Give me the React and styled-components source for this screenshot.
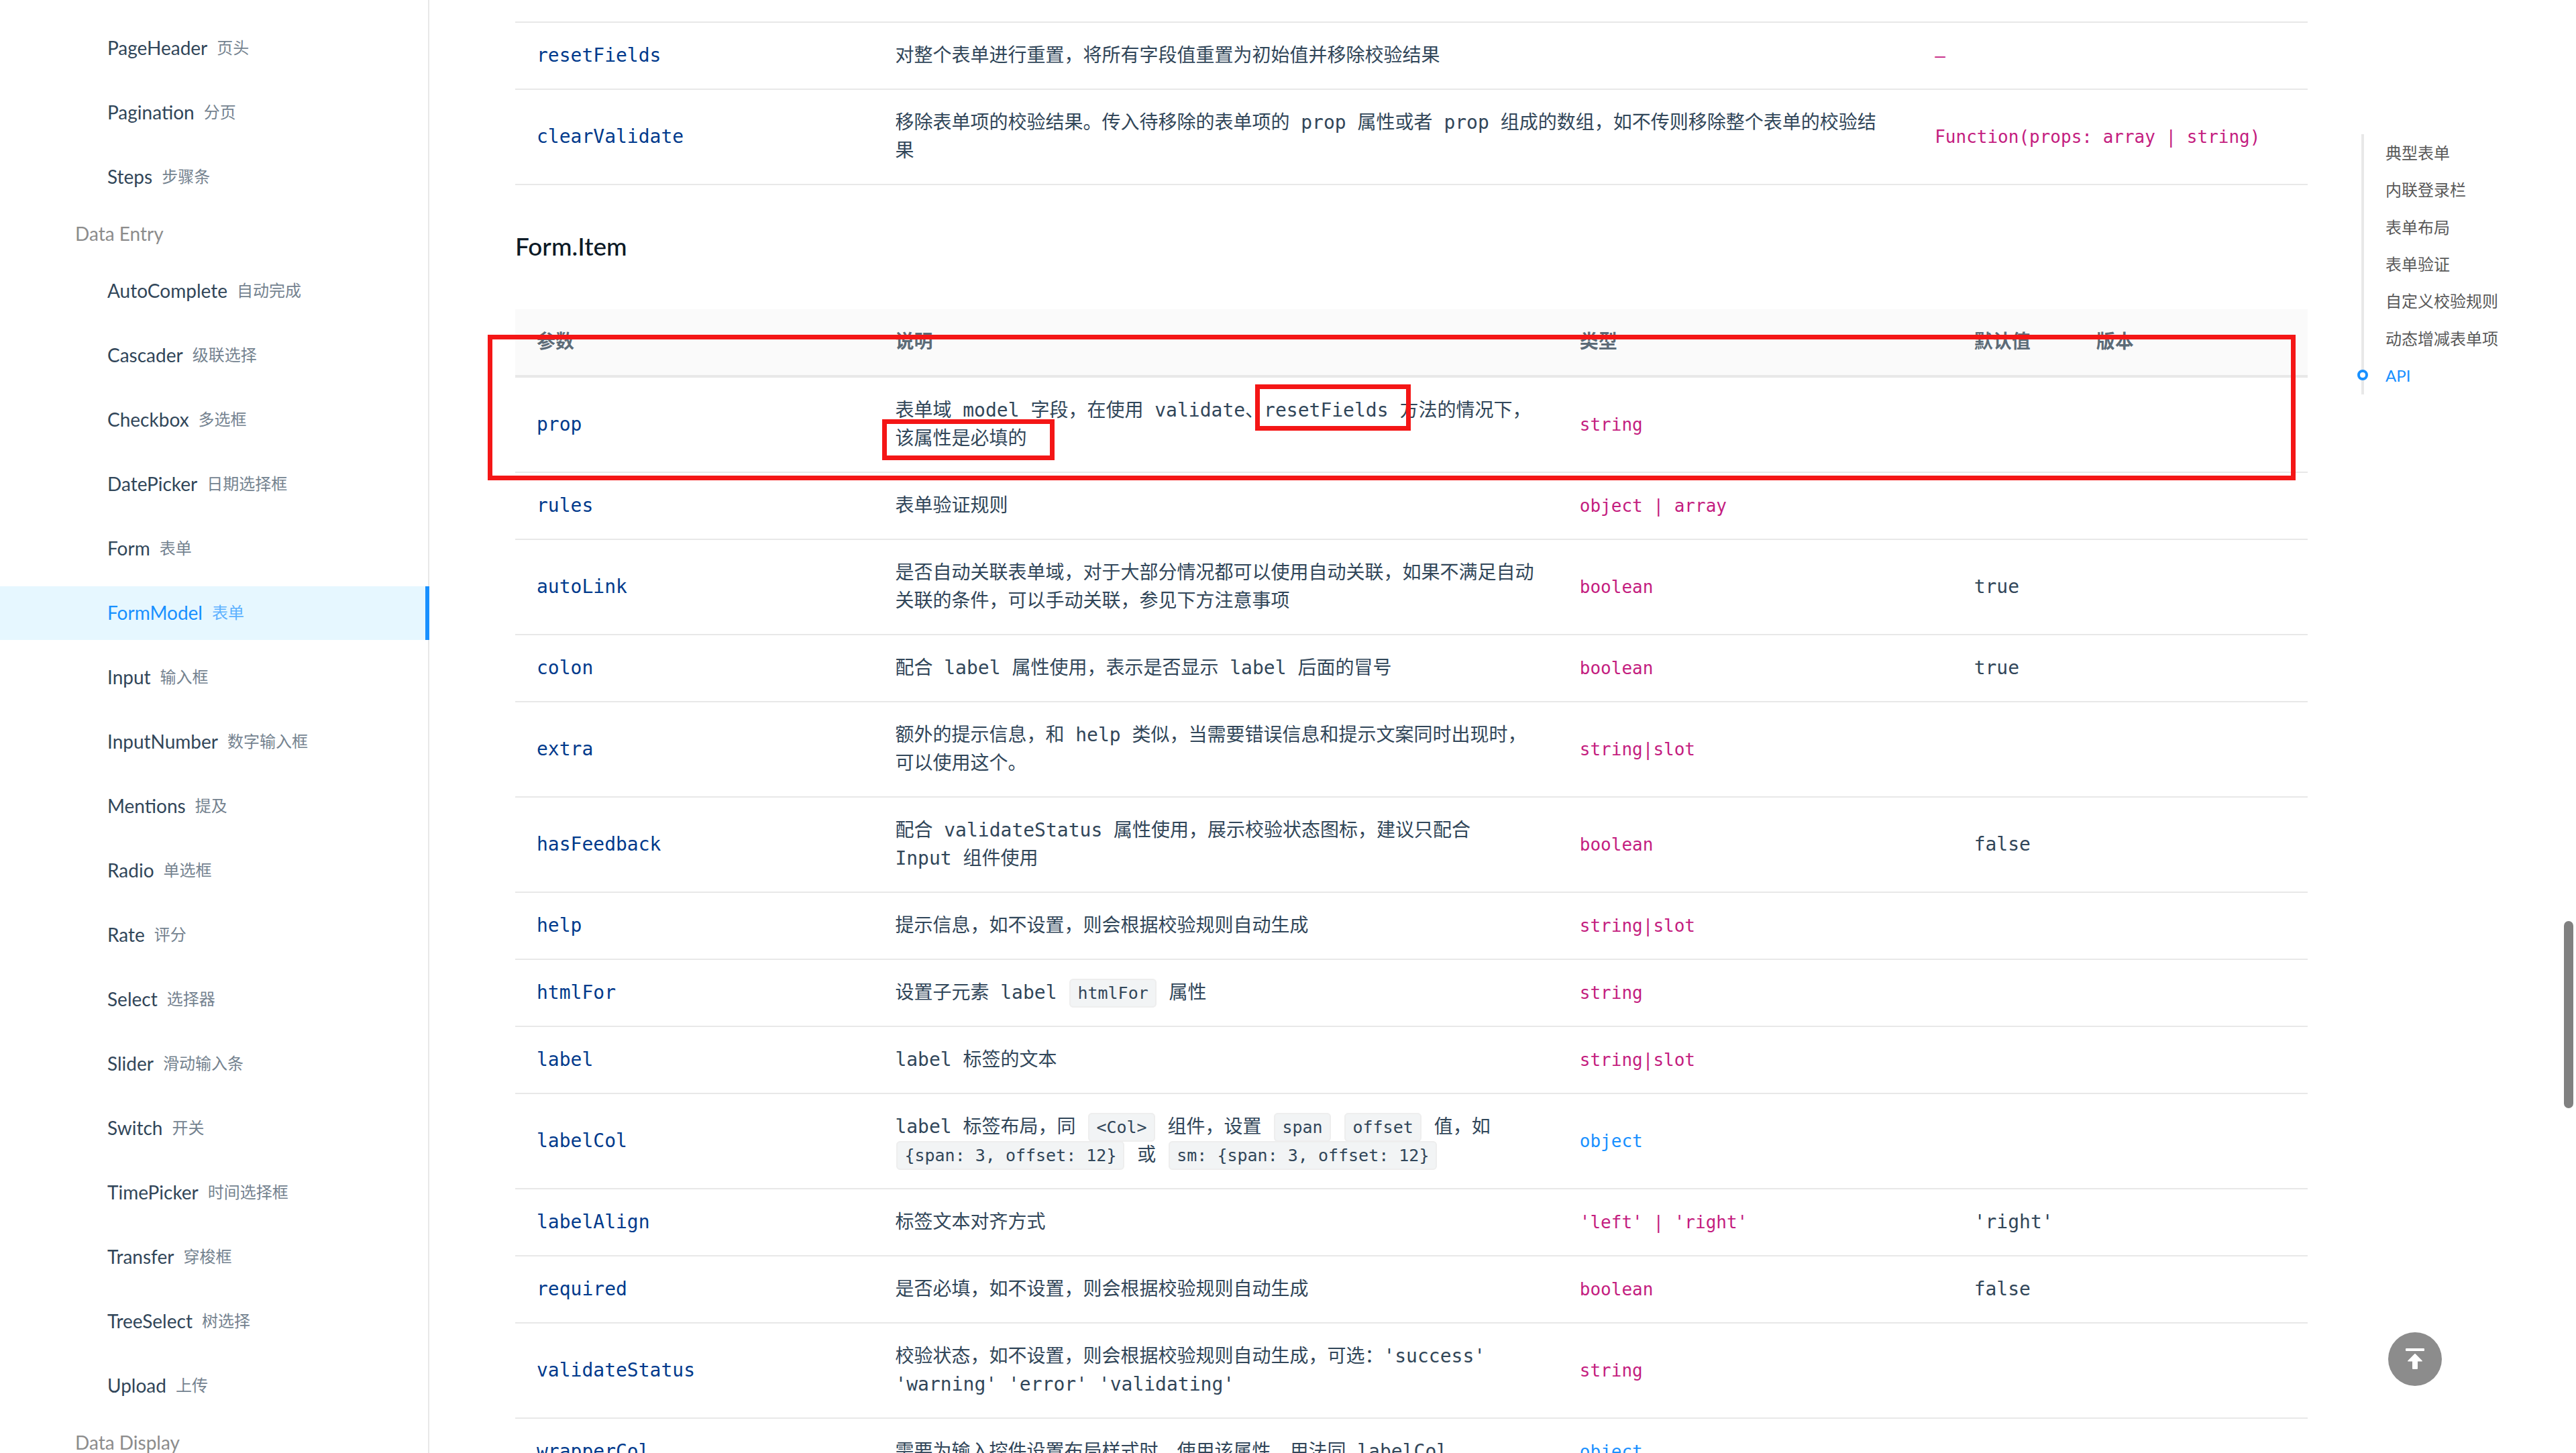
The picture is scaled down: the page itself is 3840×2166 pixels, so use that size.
import React from "react";
import styled, { createGlobalStyle } from "styled-components";

const sans = `Lato, "Noto Sans CJK SC", sans-serif`;
const mono = `"DejaVu Sans Mono", "Noto Sans CJK SC", monospace`;

const GlobalStyle = createGlobalStyle`
  *, *::before, *::after { box-sizing: border-box; }
  body {
    margin: 0;
    background: #fff;
    color: #314659;
    font-family: ${sans};
    font-size: 28px;
    line-height: 42px;
    text-spacing-trim: space-all;
  }
`;

const Page = styled.div`
  display: grid;
  grid-template-columns: minmax(0, 4fr) minmax(0, 20fr);
  height: 100vh;
  overflow: hidden;
`;

const Sidebar = styled.nav`
  border-right: 2px solid #e8e8e8;
  padding-top: 32px;
`;

const Menu = styled.ul`
  display: flex;
  flex-direction: column;
  gap: 16px;
  margin: 0 -2px 0 0;
  padding: 0;
  list-style: none;
`;

const MenuGroup = styled.li`
  padding: 0 0 2px 112px;
  line-height: 56px;
  color: #8c8c8c;
`;

const MenuLink = styled.a`
  display: flex;
  align-items: center;
  gap: 14px;
  height: 80px;
  padding: 0 0 2px 160px;
  text-decoration: none;
  color: ${(p) => (p.$active ? "#1890ff" : "#314659")};
  background: ${(p) => (p.$active ? "#e6f7ff" : "transparent")};
  border-right: 6px solid ${(p) => (p.$active ? "#1890ff" : "transparent")};
`;

const MenuSub = styled.span`
  font-size: 24px;
  opacity: 0.67;
`;

const Main = styled.div`
  display: grid;
  grid-template-columns: minmax(0, 1fr) 240px;
  column-gap: 80px;
  padding: 32px 80px 0 128px;
`;

const Article = styled.main`
  min-width: 0;
`;

const Heading = styled.h3`
  margin: 62px 0 66px;
  font-size: 37px;
  font-weight: 500;
  line-height: 57px;
  color: #0d1a26;
`;

const TableWrap = styled.div`
  position: relative;
`;

const Table = styled.table`
  width: 100%;
  table-layout: fixed;
  border-collapse: separate;
  border-spacing: 0;
  border-top: ${(p) => (p.$ruled ? "2px solid #e8e8e8" : "none")};
  font-family: ${mono};
`;

const Col = styled.col`
  width: ${(p) => p.$width};
`;

const HeadCell = styled.th`
  padding: 28px 32px;
  border-bottom: 4px solid #e8e8e8;
  background: #fafafa;
  color: #5c6b77;
  font-weight: 700;
  text-align: left;
`;

const Cell = styled.td`
  padding: 28px 32px;
  border-bottom: 2px solid #e8e8e8;
`;

const NameCell = styled(Cell)`
  color: #003a8c;
`;

const TypeCell = styled(Cell)`
  color: #c41d7f;
  font-size: 26px;
`;

const TypeLink = styled.a`
  color: #1890ff;
  text-decoration: none;
`;

const Code = styled.code`
  margin: 0 2px;
  padding: 5px 10px;
  border: 2px solid #eee;
  border-radius: 6px;
  background: #f2f4f5;
  font-family: ${mono};
  font-size: 25px;
  line-height: 1;
`;

const Callout = styled.div`
  position: absolute;
  top: ${(p) => p.$top}px;
  left: ${(p) => p.$left}px;
  ${(p) => (p.$right !== undefined ? `right: ${p.$right}px;` : `width: ${p.$width}px;`)}
  height: ${(p) => p.$height}px;
  border: 7px solid #f41616;
  pointer-events: none;
`;

const Aside = styled.aside`
  padding-top: 168px;
`;

const Anchors = styled.ul`
  display: grid;
  grid-auto-rows: 1fr;
  height: 388px;
  margin: 0;
  padding: 0;
  list-style: none;
  border-left: 4px solid #e8e8e8;
  font-size: 24px;
`;

const AnchorItem = styled.li`
  position: relative;
  display: flex;
  align-items: center;
  padding-left: 32px;
  ${(p) =>
    p.$active &&
    `&::before {
      content: "";
      position: absolute;
      left: -10px;
      top: 18px;
      width: 16px;
      height: 16px;
      border: 4px solid #1890ff;
      border-radius: 50%;
      background: #fff;
    }`}
`;

const AnchorLink = styled.a`
  color: ${(p) => (p.$active ? "#1890ff" : "#595959")};
  text-decoration: none;
  white-space: nowrap;
`;

const BackTop = styled.button`
  position: fixed;
  right: 200px;
  bottom: 100px;
  display: flex;
  align-items: center;
  justify-content: center;
  width: 80px;
  height: 80px;
  padding: 0;
  border: 0;
  border-radius: 50%;
  background: #8c8c8c;
  color: #fff;
  cursor: pointer;
`;

const ScrollThumb = styled.div`
  position: fixed;
  top: 1373px;
  right: 4px;
  width: 14px;
  height: 279px;
  border-radius: 7px;
  background: #808080;
`;

const menu = [
  ["PageHeader", "页头"],
  ["Pagination", "分页"],
  ["Steps", "步骤条"],
  ["Data Entry"],
  ["AutoComplete", "自动完成"],
  ["Cascader", "级联选择"],
  ["Checkbox", "多选框"],
  ["DatePicker", "日期选择框"],
  ["Form", "表单"],
  ["FormModel", "表单"],
  ["Input", "输入框"],
  ["InputNumber", "数字输入框"],
  ["Mentions", "提及"],
  ["Radio", "单选框"],
  ["Rate", "评分"],
  ["Select", "选择器"],
  ["Slider", "滑动输入条"],
  ["Switch", "开关"],
  ["TimePicker", "时间选择框"],
  ["Transfer", "穿梭框"],
  ["TreeSelect", "树选择"],
  ["Upload", "上传"],
  ["Data Display"],
];

const methods = [
  ["resetFields", "对整个表单进行重置，将所有字段值重置为初始值并移除校验结果", "–"],
  [
    "clearValidate",
    "移除表单项的校验结果。传入待移除的表单项的 prop 属性或者 prop 组成的数组，如不传则移除整个表单的校验结果",
    "Function(props: array | string)",
  ],
];

const objectLink = <TypeLink href="#object">object</TypeLink>;

const props = [
  ["prop", "表单域 model 字段，在使用 validate、resetFields 方法的情况下，该属性是必填的", "string", ""],
  ["rules", "表单验证规则", "object | array", ""],
  [
    "autoLink",
    "是否自动关联表单域，对于大部分情况都可以使用自动关联，如果不满足自动关联的条件，可以手动关联，参见下方注意事项",
    "boolean",
    "true",
  ],
  ["colon", "配合 label 属性使用，表示是否显示 label 后面的冒号", "boolean", "true"],
  ["extra", "额外的提示信息，和 help 类似，当需要错误信息和提示文案同时出现时，可以使用这个。", "string|slot", ""],
  ["hasFeedback", "配合 validateStatus 属性使用，展示校验状态图标，建议只配合 Input 组件使用", "boolean", "false"],
  ["help", "提示信息，如不设置，则会根据校验规则自动生成", "string|slot", ""],
  ["htmlFor", <>设置子元素 label <Code>htmlFor</Code> 属性</>, "string", ""],
  ["label", "label 标签的文本", "string|slot", ""],
  [
    "labelCol",
    <>
      label 标签布局，同 <Code>{"<Col>"}</Code> 组件，设置 <Code>span</Code> <Code>offset</Code> 值，如{" "}
      <Code>{"{span: 3, offset: 12}"}</Code> 或 <Code>{"sm: {span: 3, offset: 12}"}</Code>
    </>,
    objectLink,
    "",
  ],
  ["labelAlign", "标签文本对齐方式", "'left' | 'right'", "'right'"],
  ["required", "是否必填，如不设置，则会根据校验规则自动生成", "boolean", "false"],
  [
    "validateStatus",
    "校验状态，如不设置，则会根据校验规则自动生成，可选：'success' 'warning' 'error' 'validating'",
    "string",
    "",
  ],
  ["wrapperCol", "需要为输入控件设置布局样式时，使用该属性，用法同 labelCol", objectLink, ""],
];

const anchors = ["典型表单", "内联登录栏", "表单布局", "表单验证", "自定义校验规则", "动态增减表单项", "API"];

export default function App() {
  return (
    <>
      <GlobalStyle />
      <Page>
        <Sidebar aria-label="Components">
          <Menu>
            {menu.map(([name, sub]) =>
              sub ? (
                <li key={name}>
                  <MenuLink href={`#${name}`} $active={name === "FormModel"}>
                    <span>{name}</span>
                    <MenuSub>{sub}</MenuSub>
                  </MenuLink>
                </li>
              ) : (
                <MenuGroup key={name}>{name}</MenuGroup>
              )
            )}
          </Menu>
        </Sidebar>
        <Main>
          <Article>
            <Table $ruled>
              <colgroup>
                <Col $width="20%" />
                <Col $width="auto" />
                <Col $width="22%" />
              </colgroup>
              <tbody>
                {methods.map(([name, text, type]) => (
                  <tr key={name}>
                    <NameCell>{name}</NameCell>
                    <Cell>{text}</Cell>
                    <TypeCell>{type}</TypeCell>
                  </tr>
                ))}
              </tbody>
            </Table>
            <Heading>Form.Item</Heading>
            <TableWrap>
              <Table>
                <colgroup>
                  <Col $width="20%" />
                  <Col $width="auto" />
                  <Col $width="22%" />
                  <Col $width="182px" />
                  <Col $width="13%" />
                </colgroup>
                <thead>
                  <tr>
                    {["参数", "说明", "类型", "默认值", "版本"].map((t) => (
                      <HeadCell key={t} scope="col">{t}</HeadCell>
                    ))}
                  </tr>
                </thead>
                <tbody>
                  {props.map(([name, text, type, def]) => (
                    <tr key={name}>
                      <NameCell>{name}</NameCell>
                      <Cell>{text}</Cell>
                      <TypeCell>{type}</TypeCell>
                      <Cell>{def}</Cell>
                      <Cell />
                    </tr>
                  ))}
                </tbody>
              </Table>
              <Callout $top={38} $left={-41} $right={18} $height={217} />
              <Callout $top={112} $left={1103} $width={232} $height={69} />
              <Callout $top={164} $left={547} $width={257} $height={61} />
            </TableWrap>
          </Article>
          <Aside>
            <Anchors>
              {anchors.map((t) => (
                <AnchorItem key={t} $active={t === "API"}>
                  <AnchorLink href={`#${t}`} $active={t === "API"}>{t}</AnchorLink>
                </AnchorItem>
              ))}
            </Anchors>
          </Aside>
        </Main>
      </Page>
      <BackTop type="button" aria-label="Back to top">
        <svg width="28" height="32" viewBox="0 0 28 32" fill="currentColor" aria-hidden="true">
          <rect x="0" y="0" width="28" height="4" rx="1" />
          <path d="M13.3 8.2Q14 7.5 14.7 8.2L24.8 18.6Q25.2 19.4 24.3 19.5H18V30Q18 31 17 31H11Q10 31 10 30V19.5H3.7Q2.8 19.4 3.2 18.6Z" />
        </svg>
      </BackTop>
      <ScrollThumb />
    </>
  );
}
